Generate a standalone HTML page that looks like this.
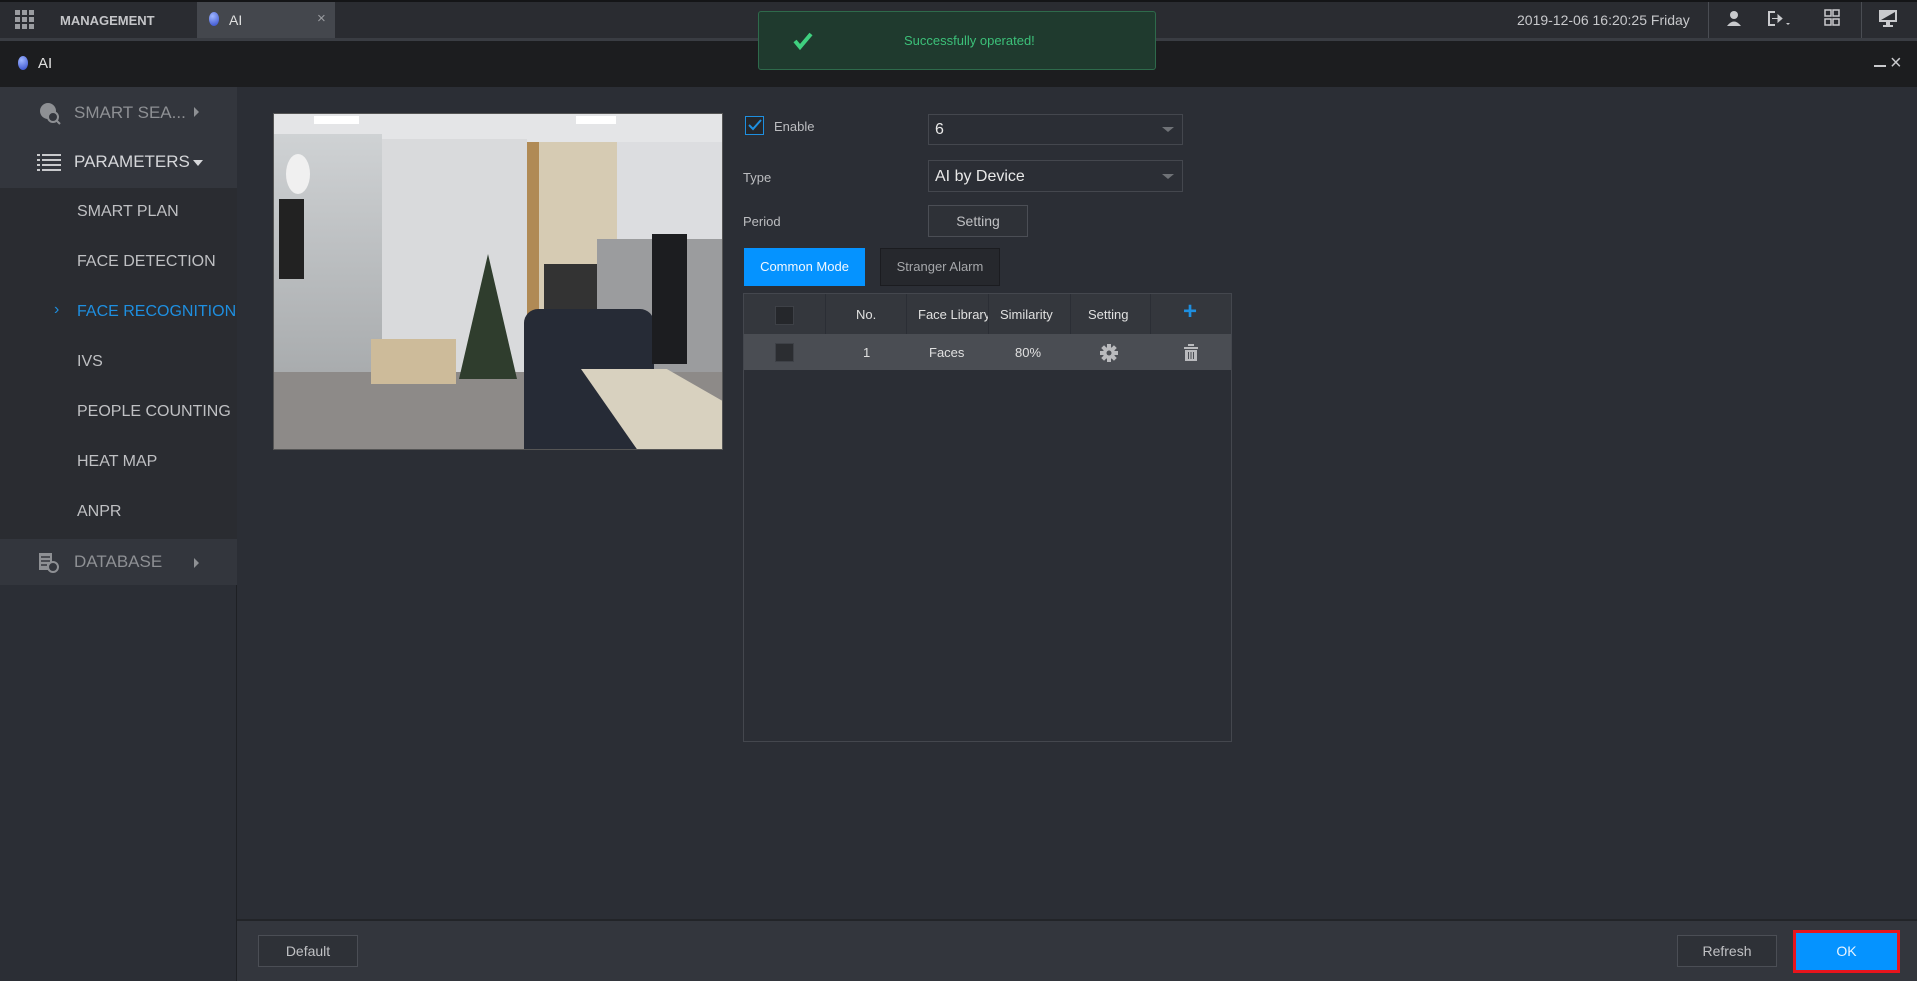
<!DOCTYPE html>
<html><head><meta charset="utf-8"><style>
*{margin:0;padding:0;box-sizing:border-box}
body{width:1917px;height:981px;background:#2b2e35;font-family:"Liberation Sans",Arial,sans-serif;position:relative;overflow:hidden;color:#c8c9cc}
.a{position:absolute}
.t{white-space:nowrap}
.sel{border:1px solid #44474e;background:#2b2e35}
.btn{border:1px solid #4b4e55;background:#2e3137;color:#c0c1c4;font-size:14px;text-align:center}
.cb{width:19px;height:19px;background:#25272b;border:1px solid #3e4147}
</style></head><body>
<!-- top bar -->
<div class="a" style="left:0;top:0;width:1917px;height:38px;background:#2a2c31;border-top:2px solid #141517"></div>
<div class="a" style="left:0;top:38px;width:1917px;height:3px;background:#3a3d43"></div>
<div class="a" style="left:15px;top:10px;width:19px;height:19px;display:grid;grid-template-columns:repeat(3,5px);gap:2px">
<i style="background:#9a9ca0"></i><i style="background:#9a9ca0"></i><i style="background:#9a9ca0"></i><i style="background:#9a9ca0"></i><i style="background:#9a9ca0"></i><i style="background:#9a9ca0"></i><i style="background:#9a9ca0"></i><i style="background:#9a9ca0"></i><i style="background:#9a9ca0"></i></div>
<div class="a t" style="left:60px;top:13px;font-size:13px;font-weight:bold;color:#c5c6c9">MANAGEMENT</div>
<div class="a" style="left:197px;top:2px;width:138px;height:36px;background:#44474d"></div>
<div class="a" style="left:209px;top:12px;width:10px;height:14px;border-radius:50%;background:radial-gradient(circle at 35% 30%,#9fb6ff,#2e47c9)"></div>
<div class="a t" style="left:229px;top:12px;font-size:14px;color:#e0e0e0">AI</div>
<div class="a t" style="left:317px;top:10px;font-size:15px;color:#9a9ca0">×</div>
<div class="a t" style="left:1517px;top:12px;font-size:14px;color:#c8c9cc">2019-12-06 16:20:25 Friday</div>
<div class="a" style="left:1708px;top:2px;width:1px;height:36px;background:#4a4d53"></div>
<div class="a" style="left:1861px;top:2px;width:1px;height:36px;background:#4a4d53"></div>
<svg class="a" style="left:1725px;top:9px" width="18" height="20"><circle cx="9" cy="6" r="4" fill="#c9cacd"/><path d="M2 17 Q9 8 16 17Z" fill="#c9cacd"/></svg>
<svg class="a" style="left:1766px;top:9px" width="28" height="20"><path d="M9 3H3V16H9" stroke="#c9cacd" stroke-width="2" fill="none"/><path d="M6 9.5H12V6L16 9.5 12 13V9.5" fill="#c9cacd" stroke="#c9cacd"/><path d="M20 14H24L22 16Z" fill="#c9cacd"/></svg>
<svg class="a" style="left:1823px;top:8px" width="18" height="20"><rect x="2" y="2" width="6" height="6" fill="none" stroke="#c9cacd" stroke-width="1.5"/><rect x="10" y="2" width="6" height="6" fill="none" stroke="#c9cacd" stroke-width="1.5"/><rect x="2" y="11" width="6" height="6" fill="none" stroke="#c9cacd" stroke-width="1.5"/><rect x="10" y="11" width="6" height="6" fill="none" stroke="#c9cacd" stroke-width="1.5"/></svg>
<svg class="a" style="left:1878px;top:8px" width="20" height="20"><rect x="1" y="2" width="18" height="12" fill="#c9cacd"/><path d="M3 12L17 4V12Z" fill="#2a2c31"/><rect x="8" y="14" width="4" height="3" fill="#c9cacd"/><rect x="5" y="17" width="10" height="2" fill="#c9cacd"/></svg>
<!-- second bar -->
<div class="a" style="left:0;top:41px;width:1917px;height:46px;background:#1c1d1f"></div>
<div class="a" style="left:18px;top:56px;width:10px;height:14px;border-radius:50%;background:radial-gradient(circle at 35% 30%,#9fb6ff,#2e47c9)"></div>
<div class="a t" style="left:38px;top:55px;font-size:15px;color:#e0e0e0">AI</div>
<div class="a" style="left:1874px;top:65px;width:12px;height:2px;background:#c9cacd"></div>
<div class="a t" style="left:1890px;top:52px;font-size:20px;color:#c9cacd">×</div>
<!-- toast -->
<div class="a" style="left:758px;top:11px;width:398px;height:59px;background:#1f3a2e;border:1px solid #2e6a4b;border-radius:3px"></div>
<svg class="a" style="left:793px;top:32px" width="20" height="18"><path d="M2 9L7 15L18 2" stroke="#3fd07f" stroke-width="4" fill="none"/></svg>
<div class="a t" style="left:904px;top:33px;font-size:13px;color:#3cc079">Successfully operated!</div>
<!-- sidebar -->
<div class="a" style="left:0;top:87px;width:237px;height:894px;background:#2b2e35;border-right:1px solid #1e2024"></div>
<div class="a" style="left:0;top:87px;width:237px;height:101px;background:#33363d"></div>
<div class="a" style="left:0;top:188px;width:237px;height:351px;background:#2a2c31"></div>
<div class="a" style="left:0;top:539px;width:237px;height:46px;background:#33363d"></div>
<svg class="a" style="left:38px;top:102px" width="24" height="24"><circle cx="10" cy="9" r="8" fill="#8e9094"/><circle cx="15" cy="15" r="5" fill="#33363d" stroke="#8e9094" stroke-width="2"/><path d="M18 18L22 22" stroke="#8e9094" stroke-width="2"/></svg>
<div class="a t" style="left:74px;top:103px;font-size:17px;color:#8e9094">SMART SEA...</div>
<div class="a" style="left:194px;top:107px;border-left:5px solid #8e9094;border-top:5px solid transparent;border-bottom:5px solid transparent"></div>
<svg class="a" style="left:37px;top:153px" width="24" height="18"><g fill="#c9cacd"><rect x="0" y="1" width="3" height="2"/><rect x="5" y="1" width="19" height="2"/><rect x="0" y="6" width="3" height="2"/><rect x="5" y="6" width="19" height="2"/><rect x="0" y="11" width="3" height="2"/><rect x="5" y="11" width="19" height="2"/><rect x="0" y="16" width="3" height="2"/><rect x="5" y="16" width="19" height="2"/></g></svg>
<div class="a t" style="left:74px;top:152px;font-size:17px;color:#d6d7da">PARAMETERS</div>
<div class="a" style="left:193px;top:160px;border-top:6px solid #d6d7da;border-left:5px solid transparent;border-right:5px solid transparent"></div>
<div class="a t" style="left:77px;top:203px;font-size:16px;color:#bfc0c3">SMART PLAN</div>
<div class="a t" style="left:77px;top:253px;font-size:16px;color:#bfc0c3">FACE DETECTION</div>
<div class="a t" style="left:54px;top:301px;font-size:16px;color:#1e8fe0">›</div>
<div class="a t" style="left:77px;top:303px;font-size:16px;color:#1e8fe0">FACE RECOGNITION</div>
<div class="a t" style="left:77px;top:353px;font-size:16px;color:#bfc0c3">IVS</div>
<div class="a t" style="left:77px;top:403px;font-size:16px;color:#bfc0c3">PEOPLE COUNTING</div>
<div class="a t" style="left:77px;top:453px;font-size:16px;color:#bfc0c3">HEAT MAP</div>
<div class="a t" style="left:77px;top:503px;font-size:16px;color:#bfc0c3">ANPR</div>
<svg class="a" style="left:38px;top:552px" width="22" height="22"><rect x="1" y="1" width="13" height="17" fill="#8e9094"/><g stroke="#33363d" stroke-width="1.5"><path d="M3 5H12M3 9H12M3 13H9"/></g><circle cx="15" cy="15" r="5" fill="#33363d" stroke="#8e9094" stroke-width="2"/></svg>
<div class="a t" style="left:74px;top:552px;font-size:17px;color:#8e9094">DATABASE</div>
<div class="a" style="left:194px;top:558px;border-left:5px solid #8e9094;border-top:5px solid transparent;border-bottom:5px solid transparent"></div>
<!-- camera -->
<div class="a" style="left:273px;top:113px;width:450px;height:337px;background:#b8babd;overflow:hidden;border:1px solid #555">
<div class="a" style="left:0;top:0;width:450px;height:28px;background:#e4e5e7"></div>
<div class="a" style="left:40px;top:2px;width:45px;height:8px;background:#fff"></div>
<div class="a" style="left:302px;top:2px;width:40px;height:8px;background:#fff"></div>
<div class="a" style="left:0;top:20px;width:108px;height:300px;background:linear-gradient(#cfd2d4,#9fa2a4)"></div>
<div class="a" style="left:108px;top:25px;width:145px;height:235px;background:#d9dadc"></div>
<div class="a" style="left:253px;top:28px;width:90px;height:205px;background:linear-gradient(90deg,#b08a55 0 12px,#d6cbb3 12px)"></div>
<div class="a" style="left:270px;top:150px;width:55px;height:80px;background:#333"></div>
<div class="a" style="left:343px;top:28px;width:107px;height:100px;background:#dcdde0"></div>
<div class="a" style="left:323px;top:125px;width:127px;height:135px;background:#9b9c9e"></div>
<div class="a" style="left:0;top:258px;width:450px;height:80px;background:#8d8a88"></div>
<div class="a" style="left:97px;top:225px;width:85px;height:45px;background:#cdbb9a"></div>
<div class="a" style="left:185px;top:140px;width:58px;height:125px;background:#2f3d2d;clip-path:polygon(50% 0,100% 100%,0 100%)"></div>
<div class="a" style="left:250px;top:195px;width:130px;height:142px;background:#262b36;border-radius:14px 14px 0 0"></div>
<div class="a" style="left:378px;top:120px;width:35px;height:130px;background:#1c1d20"></div>
<div class="a" style="left:307px;top:255px;width:143px;height:82px;background:#d8d1bf;clip-path:polygon(0 0,60% 0,100% 40%,100% 100%,40% 100%)"></div>
<div class="a" style="left:5px;top:85px;width:25px;height:80px;background:#222"></div>
<div class="a" style="left:12px;top:40px;width:24px;height:40px;background:#f0f0f0;border-radius:50%"></div>
</div>
<!-- form -->
<div class="a" style="left:745px;top:116px;width:19px;height:19px;border:1px solid #1e8fe0;background:#25272b"></div>
<svg class="a" style="left:748px;top:119px" width="14" height="12"><path d="M1 6L5 10L13 1" stroke="#1e8fe0" stroke-width="2" fill="none"/></svg>
<div class="a t" style="left:774px;top:119px;font-size:13px;color:#bcbdc0">Enable</div>
<div class="a sel" style="left:928px;top:114px;width:255px;height:31px"></div>
<div class="a t" style="left:935px;top:121px;font-size:16px;color:#e8e8e8">6</div>
<div class="a" style="left:1162px;top:127px;border-top:5px solid #6f7277;border-left:6px solid transparent;border-right:6px solid transparent"></div>
<div class="a t" style="left:743px;top:170px;font-size:13px;color:#bcbdc0">Type</div>
<div class="a sel" style="left:928px;top:160px;width:255px;height:32px"></div>
<div class="a t" style="left:935px;top:168px;font-size:16px;color:#e8e8e8">AI by Device</div>
<div class="a" style="left:1162px;top:174px;border-top:5px solid #6f7277;border-left:6px solid transparent;border-right:6px solid transparent"></div>
<div class="a t" style="left:743px;top:214px;font-size:13px;color:#bcbdc0">Period</div>
<div class="a btn" style="left:928px;top:205px;width:100px;height:32px;line-height:30px">Setting</div>
<div class="a" style="left:744px;top:248px;width:121px;height:38px;background:#0593ff;color:#f2f8ff;font-size:13px;text-align:center;line-height:37px">Common Mode</div>
<div class="a" style="left:880px;top:248px;width:120px;height:38px;background:#26282d;border:1px solid #1b1c20;color:#a5a7aa;font-size:13px;text-align:center;line-height:36px">Stranger Alarm</div>
<!-- table -->
<div class="a" style="left:743px;top:293px;width:489px;height:449px;border:1px solid #44474e;background:#2b2e35"></div>
<div class="a" style="left:744px;top:294px;width:487px;height:40px;background:#34373d"></div>
<div class="a" style="left:744px;top:334px;width:487px;height:36px;background:#4a4d53"></div>
<div class="a" style="left:825px;top:294px;width:1px;height:40px;background:#2b2e35"></div>
<div class="a" style="left:906px;top:294px;width:1px;height:40px;background:#2b2e35"></div>
<div class="a" style="left:988px;top:294px;width:1px;height:40px;background:#2b2e35"></div>
<div class="a" style="left:1070px;top:294px;width:1px;height:40px;background:#2b2e35"></div>
<div class="a" style="left:1150px;top:294px;width:1px;height:40px;background:#2b2e35"></div>
<div class="a cb" style="left:775px;top:306px"></div>
<div class="a t" style="left:856px;top:307px;font-size:13px;color:#e0e0e0">No.</div>
<div class="a t" style="left:918px;top:307px;font-size:13px;color:#e0e0e0;width:70px;overflow:hidden">Face Library</div>
<div class="a t" style="left:1000px;top:307px;font-size:13px;color:#e0e0e0">Similarity</div>
<div class="a t" style="left:1088px;top:307px;font-size:13px;color:#e0e0e0">Setting</div>
<div class="a t" style="left:1183px;top:298px;font-size:24px;font-weight:bold;color:#1e8fe0">+</div>
<div class="a cb" style="left:775px;top:343px;background:#2b2d31"></div>
<div class="a t" style="left:863px;top:345px;font-size:13px;color:#e0e0e0">1</div>
<div class="a t" style="left:929px;top:345px;font-size:13px;color:#e0e0e0">Faces</div>
<div class="a t" style="left:1015px;top:345px;font-size:13px;color:#e0e0e0">80%</div>
<svg class="a" style="left:1099px;top:343px" width="20" height="20" viewBox="0 0 20 20"><g fill="#b9babd"><circle cx="10" cy="10" r="6"/><rect x="8" y="1" width="4" height="18"/><rect x="1" y="8" width="18" height="4"/><rect x="8" y="1" width="4" height="18" transform="rotate(45 10 10)"/><rect x="8" y="1" width="4" height="18" transform="rotate(-45 10 10)"/></g><circle cx="10" cy="10" r="2.5" fill="#4a4d53"/></svg>
<svg class="a" style="left:1183px;top:344px" width="16" height="18"><g fill="#b9babd"><rect x="1" y="3" width="14" height="2"/><rect x="5" y="0" width="6" height="2"/><rect x="2" y="6" width="12" height="11"/></g><g stroke="#4a4d53" stroke-width="1"><path d="M5.5 8V15M8 8V15M10.5 8V15"/></g></svg>
<!-- bottom -->
<div class="a" style="left:237px;top:919px;width:1680px;height:62px;background:#33363d;border-top:2px solid #222428"></div>
<div class="a btn" style="left:258px;top:935px;width:100px;height:32px;line-height:30px">Default</div>
<div class="a btn" style="left:1677px;top:935px;width:100px;height:32px;line-height:30px">Refresh</div>
<div class="a" style="left:1793px;top:930px;width:107px;height:43px;border:3px solid #e8141c;background:#0593ff;color:#e8f4ff;font-size:14px;text-align:center;line-height:37px">OK</div>
</body></html>
